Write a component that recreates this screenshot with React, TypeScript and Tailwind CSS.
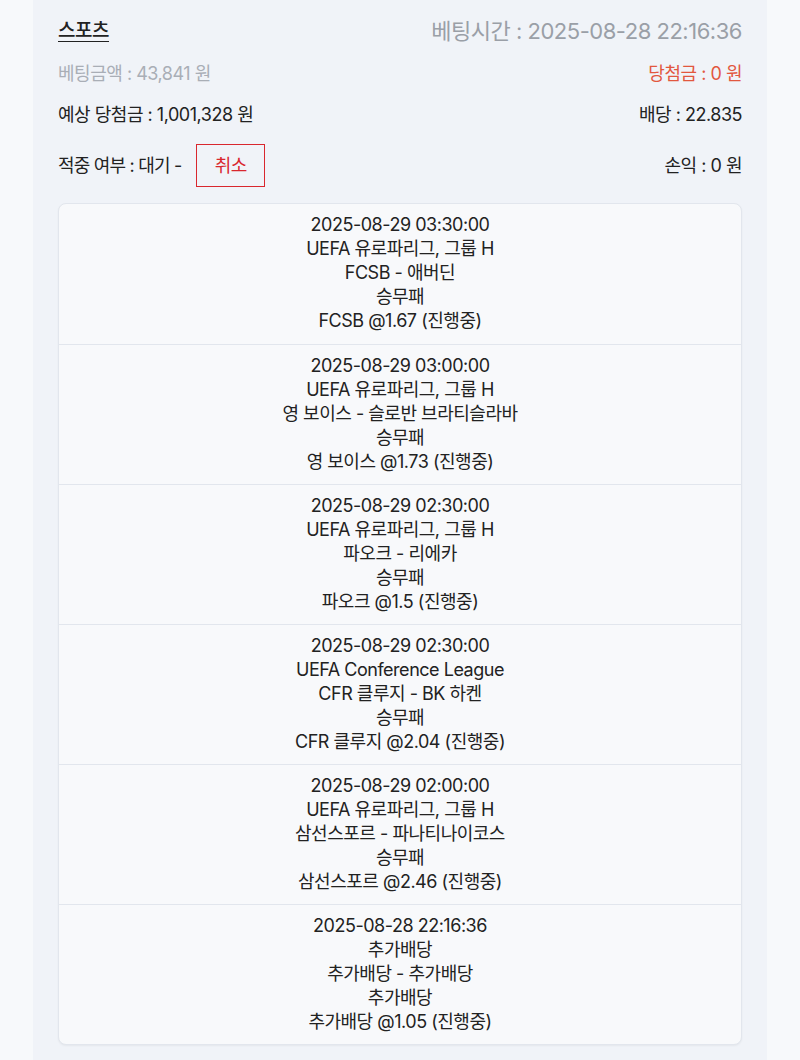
import React from 'react'

const bets = [
  ['2025-08-29 03:30:00', 'UEFA 유로파리그, 그룹 H', 'FCSB - 애버딘', '승무패', 'FCSB @1.67 (진행중)'],
  ['2025-08-29 03:00:00', 'UEFA 유로파리그, 그룹 H', '영 보이스 - 슬로반 브라티슬라바', '승무패', '영 보이스 @1.73 (진행중)'],
  ['2025-08-29 02:30:00', 'UEFA 유로파리그, 그룹 H', '파오크 - 리에카', '승무패', '파오크 @1.5 (진행중)'],
  ['2025-08-29 02:30:00', 'UEFA Conference League', 'CFR 클루지 - BK 하켄', '승무패', 'CFR 클루지 @2.04 (진행중)'],
  ['2025-08-29 02:00:00', 'UEFA 유로파리그, 그룹 H', '삼선스포르 - 파나티나이코스', '승무패', '삼선스포르 @2.46 (진행중)'],
  ['2025-08-28 22:16:36', '추가배당', '추가배당 - 추가배당', '추가배당', '추가배당 @1.05 (진행중)'],
]

export default function App() {
  return (
    <div className="min-h-[1060px] bg-[#f7f9fb] font-['Inter','Noto_Sans_CJK_KR',sans-serif] tracking-[-0.03em] text-[#222]">
      <div className="mx-[33px] min-h-[1060px] bg-[#f0f3f8] px-[25px] pt-[16px] pb-[16px]">
        <div className="flex h-[30px] items-center justify-between">
          <span className="text-[19px] font-medium underline decoration-1 underline-offset-[4px]">스포츠</span>
          <span className="text-[22px] text-[#9a9fa7]">베팅시간 : 2025-08-28 22:16:36</span>
        </div>
        <div className="mt-[14px] flex items-center justify-between text-[18px]">
          <span className="text-[#a9aeb6]">베팅금액 : 43,841 원</span>
          <span className="text-[#e2573f]">당첨금 : 0 원</span>
        </div>
        <div className="mt-[14px] flex items-center justify-between text-[18px]">
          <span>예상 당첨금 : 1,001,328 원</span>
          <span>배당 : 22.835</span>
        </div>
        <div className="mt-[16px] flex items-center justify-between text-[18px]">
          <div className="flex items-center">
            <span className="tracking-[-0.045em]">적중 여부 : 대기 -</span>
            <div className="ml-[15px] flex h-[43px] w-[69px] items-center justify-center border border-solid border-[#d9272e] text-[18px] text-[#d9272e]">취소</div>
          </div>
          <span>손익 : 0 원</span>
        </div>
        <div className="mt-[16px] rounded-[8px] border border-[#e2e6ed] bg-[#f8f9fb] shadow-[0_1px_2px_rgba(0,0,0,0.05)]">
          {bets.map((b, i) => (
            <div key={i} className={`flex h-[140px] flex-col pt-[9px] text-center text-[18px] leading-[24px] ${i > 0 ? 'border-t border-[#e2e6ed]' : ''}`}>
              {b.map((t, j) => (
                <div key={j}>{t}</div>
              ))}
            </div>
          ))}
        </div>
      </div>
    </div>
  )
}
